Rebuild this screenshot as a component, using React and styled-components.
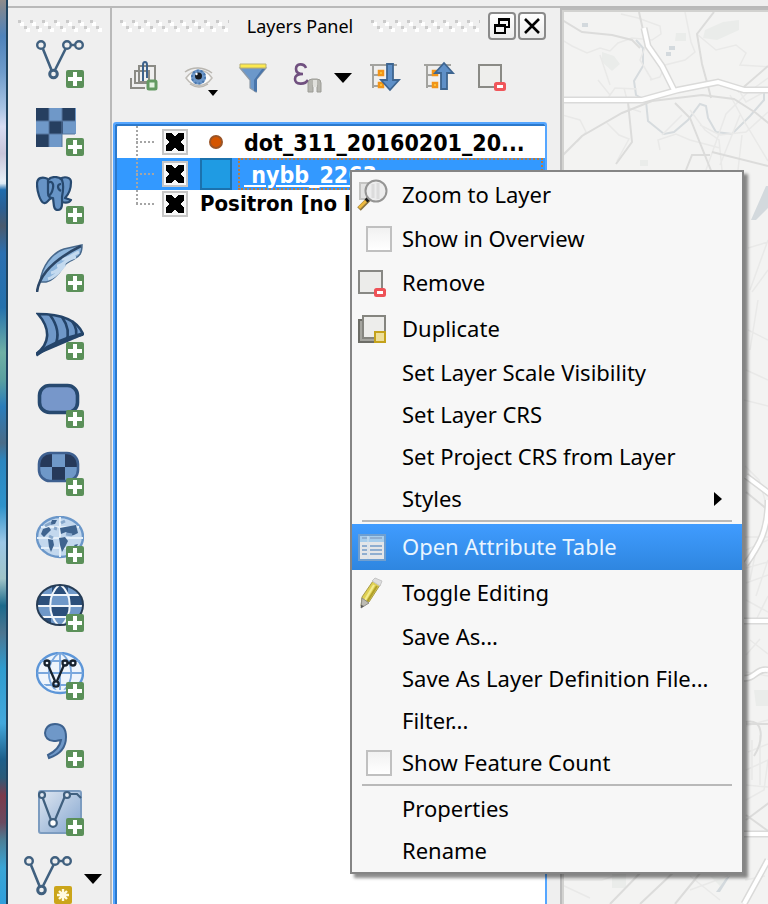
import React from 'react';
import styled, { createGlobalStyle, css } from 'styled-components';

const GlobalStyle = createGlobalStyle`
  *, *::before, *::after { box-sizing: border-box; }
  body { margin: 0; background: #efefef; color: #000; font-family: "Noto Sans", "Open Sans", sans-serif; }
  button { border: 0; padding: 0; background: none; color: inherit; font: inherit; }
  svg { display: block; flex: none; }
`;

/* ---------- shell ---------- */

const Desktop = styled.div`
  position: relative;
  display: flex;
  height: 100vh;
  overflow: hidden;
`;

const Wallpaper = styled.div`
  flex: 0 0 8px;
  border-right: 2px solid #1f435f;
  background: linear-gradient(
    #8f8c8b 0, #7d8794 1%, #4f83bb 4%, #6f9ccb 8%, #a9c4e4 12%, #d8dcf2 14%, #c9c5da 17%,
    #e6eef6 20%, #dbe9f4 20.3%, #1f6cad 21%, #2a5f94 23%, #4a5a6d 25%, #2a6fb0 28%, #2471ad 34%,
    #6fb0a5 39%, #5aa0a0 42%, #2a7dbb 45%, #4a6c88 49%, #2a86c0 51%, #2f93cb 56%, #9cc7e6 60%,
    #a0c4c8 64%, #1b6a8c 67%, #4c7590 70%, #2f9ccf 74%, #43a8dc 80%, #1d5f8a 84%, #2a5a78 86%,
    #7b3a4b 88%, #6a4a60 91%, #4b7f97 93%, #39a5d6 96%, #2f9fdc 100%
  );
`;

const AppWindow = styled.div`
  flex: 1;
  min-width: 0;
  display: flex;
  flex-direction: column;
  background: #efefef;
`;

const TopStrip = styled.div`
  flex: 0 0 8px;
  border-bottom: 2px solid #b9b9b9;
`;

const Workspace = styled.div`
  flex: 1;
  min-height: 0;
  display: flex;
`;

const Grip = styled.div`
  flex: ${p => (p.$fill ? '1 1 0' : 'none')};
  height: 12px;
  background:
    conic-gradient(from 0deg at 3px 3px, transparent 75%, #cbcbcb 0) 0 0 / 12px 12px,
    conic-gradient(from 0deg at 3px 3px, transparent 75%, #cbcbcb 0) 6px 6px / 12px 12px,
    conic-gradient(from 0deg at 4px 4px, transparent 75%, #fff 0) 2px 2px / 12px 12px,
    conic-gradient(from 0deg at 4px 4px, transparent 75%, #fff 0) 8px 8px / 12px 12px;
`;

/* ---------- left toolbar ---------- */

const Toolbar = styled.nav`
  flex: 0 0 104px;
  display: flex;
  flex-direction: column;
  padding: 12px 8px 0 10px;
  border-right: 2px solid #b9b9b9;

  ${Grip} { margin-bottom: -2px; }
`;

const ToolButton = styled.button`
  flex: none;
  display: flex;
  align-items: flex-end;
  padding: 10px 18px;

  &:last-child { padding: 10px 0 0 6px; gap: 12px; }
  &:last-child > svg:last-child { margin-bottom: 20px; }
`;

const INK = '#40607f';
const NAVY = '#27496f';
const STEEL = '#6f98c8';

const Vee = ({ color = INK }) => (
  <g fill="none" stroke={color} strokeWidth="2.4">
    <path d="M7 9 15.500 30M19 30 29.500 9M35 5h4" strokeWidth="2.600" />
    <circle cx="5" cy="5" r="3.800" />
    <circle cx="31" cy="5" r="3.800" />
    <circle cx="43" cy="5" r="3.800" />
    <circle cx="17.500" cy="34" r="3.800" strokeWidth="3" />
  </g>
);

const PlusBadge = () => (
  <g>
    <rect x="30" y="30" width="18" height="18" rx="2" fill="#5b9059" />
    <path d="M39 32v14M32 39h14" stroke="#fff" strokeWidth="4" />
  </g>
);

const GLOBE_GRID = 'M0 24h48M4 12h40M4 36h40M24 3v42M24 3C9 14 9 34 24 45M24 3c15 11 15 31 0 42';

const toolIcons = {
  'Add Vector Layer': <Vee />,
  'Add Raster Layer': (
    <g>
      <path fill={STEEL} d="M0 0h40v26H26v13H0z" />
      <path fill="#263f60" d="M0 0h13v13H0zM26 0h13v13H26zM13 13h14v13H13zM0 26h13v13H0z" />
      <path d="M13 0v39M26 0v39M0 13h39M0 26h39" stroke="#56779f" strokeWidth="1" />
    </g>
  ),
  'Add PostGIS Layers': (
    <g stroke={NAVY} strokeWidth="2.200" fill="#6794c6" strokeLinejoin="round">
      <path d="M12 3C6 0 1 2 1 8c0 7 3 18 7 19 3 1 4-3 6-4l2-1" />
      <path d="M24 3c4-3 11-2 11 3 0 6-2 12-6 16l6 2c-2 3-6 3-9 2" />
      <path d="M12 4c3-4 11-4 14 0 2 5 1 12 0 17 0 6 1 13-4 13s-4-6-5-12c-3 0-5-1-5-5z" />
      <path d="M12 7c3-3 6 0 5 5s-2 7-5 8M25 8c-4 0-4 5 0 7" fill="none" />
    </g>
  ),
  'Add SpatiaLite Layer': (
    <g>
      <path d="M4 38C6 22 16 9 28 5l18-4c0 8-2 11-8 14-5 3-8 3-11 8-4 7-11 14-17 15z" fill="#8db5dc" stroke="#48698c" strokeWidth="1.500" />
      <path d="M12 35c8-2 12-9 17-14M15 29c6-1 10-6 14-10M21 22c6 0 9-7 19-9M26 15c6 1 11-5 17-7" stroke="#c4daef" strokeWidth="3" fill="none" />
      <path d="M1 48C3 31 19 15 45 2" stroke="#2c4767" strokeWidth="2.600" fill="none" />
    </g>
  ),
  'Add MSSQL Spatial Layer': (
    <g fill={STEEL} stroke="#244469" strokeWidth="2.600">
      <path d="M2 2c15 0 38 3 45 20L0 42c14-10 15-25 2-40z" />
      <path d="M14 3c9 12 9 22 5 31M26 5c7 10 7 18 4 25M36 9c5 7 5 13 3 17" fill="none" />
      <path d="M0 43c12-9 25-16 47-21" fill="none" strokeWidth="3.500" />
    </g>
  ),
  'Add Oracle Spatial Layer': (
    <rect x="3.500" y="5.500" width="38" height="27" rx="10" fill="#7797ca" stroke={NAVY} strokeWidth="3.600" />
  ),
  'Add Oracle GeoRaster Layer': (
    <g>
      <rect x="3" y="5" width="39" height="28" rx="11" fill={STEEL} />
      <path d="M16 5v14H3v-4C3 9 8 5 14 5zM29 5h3c6 0 10 5 10 10v4H29zM16 19h13v14H16z" fill="#26395a" />
      <rect x="3" y="5" width="39" height="28" rx="11" fill="none" stroke="#3e6090" strokeWidth="2.600" />
    </g>
  ),
  'Add WMS/WMTS Layer': (
    <g>
      <ellipse cx="24" cy="21" rx="23" ry="20" fill="#c3d8ee" stroke="#6b97c9" strokeWidth="2.400" />
      <path d="M1 22h46M24 1v40M5 11h38M5 32h38" stroke="#e4eff9" strokeWidth="2" />
      <path d="M7 13l6-2 2 3-4 4-3 3-3-3zM12 23l5 1 1 5-3 7-2-5zM24 12l5-1 11-2 2 8-4 2-4 1-4-4-5 2zM23 22l6-1 3 4-3 6-3 5-2-7zM38 29l4-1-2 4zM16 4l5 0-2 4-5 1z" fill="#3f648f" />
      <path d="M9 10l6-3M18 12l3 1M25 7l4-2M30 18l6 1M13 20l4 2" stroke="#87a8cc" strokeWidth="3" />
    </g>
  ),
  'Add WCS Layer': (
    <g>
      <clipPath id="wcs"><ellipse cx="24" cy="21" rx="23" ry="20" /></clipPath>
      <g clipPath="url(#wcs)">
        <path fill={STEEL} d="M0 0h48v42H0z" />
        <path fill="#2b4f7b" d="M16 0h16v11H16zM0 11h15v11H0zM34 11h14v11H34zM15 22h19v11H15zM0 33h15v9H0z" />
        <path d="M0 11h48M0 22h48M0 33h48M24 0C11 11 11 31 24 43M24 0c13 11 13 31 0 43" stroke="#f1f6fb" strokeWidth="2" fill="none" />
      </g>
      <ellipse cx="24" cy="21" rx="23" ry="20" fill="none" stroke="#263c55" strokeWidth="2" />
    </g>
  ),
  'Add WFS Layer': (
    <g>
      <clipPath id="wfs"><ellipse cx="24" cy="21" rx="23" ry="20" /></clipPath>
      <ellipse cx="24" cy="21" rx="23" ry="20" fill="#eef4fb" stroke="#5d96d8" strokeWidth="2.400" />
      <path d={GLOBE_GRID} transform="translate(0 -3)" stroke="#79a7dd" strokeWidth="1.800" fill="none" clipPath="url(#wfs)" />
      <g fill="none" stroke="#17222e" strokeWidth="2.300">
        <path d="M12 13 19 29M21 29 28 13M32 11h3" />
        <circle cx="11" cy="11" r="2.500" />
        <circle cx="29" cy="11" r="2.500" />
        <circle cx="37" cy="11" r="2.500" />
        <circle cx="20" cy="32" r="2.700" />
      </g>
    </g>
  ),
  'Add Delimited Text Layer': (
    <path d="M30 17C30 8 26 4 19 4S9 9 9 13s3 8 9 8c3 0 5-1 7-1-1 6-5 11-13 15l1 3c12-4 17-12 17-21z" fill={STEEL} stroke="#3d628f" strokeWidth="2" />
  ),
  'Add Virtual Layer': (
    <g>
      <linearGradient id="virt" x1="0" y1="0" x2="1" y2="1">
        <stop offset="0" stopColor="#dfe7f1" />
        <stop offset="1" stopColor="#83a5cf" />
      </linearGradient>
      <rect x="3" y="3" width="42" height="42" rx="2" fill="url(#virt)" stroke="#7c9cc0" strokeWidth="2" />
      <path d="M6 8 15 32M19 32 29 8M33 6h8l4 4" stroke={INK} strokeWidth="2.200" fill="none" />
      <g fill="#dfe7f1" stroke={INK} strokeWidth="2.200">
        <circle cx="6" cy="7" r="3" />
        <circle cx="31" cy="7" r="3" />
        <circle cx="17" cy="35" r="3.800" fill="#fff" />
      </g>
    </g>
  ),
};

const Icon48 = ({ children }) => (
  <svg width="48" height="48" viewBox="0 0 48 48" aria-hidden="true">{children}</svg>
);

const CaretDown = () => (
  <svg width="18" height="10" viewBox="0 0 18 10" aria-hidden="true">
    <path d="M0 0h18l-9 10z" />
  </svg>
);

/* ---------- layers dock ---------- */

const Dock = styled.section`
  flex: 0 1 448px;
  min-width: 0;
  display: flex;
  flex-direction: column;
`;

const DockHeader = styled.header`
  flex: 0 0 36px;
  display: flex;
  align-items: center;
  padding: 0 14px 0 8px;
`;

const DockTitle = styled.h1`
  margin: 0 18px;
  font-size: 18px;
  font-weight: 400;
  line-height: 24px;
  white-space: nowrap;
`;

const FrameButtons = styled.div`
  display: flex;
  gap: 2px;
  margin-left: 8px;
`;

const FrameButton = styled.button`
  display: grid;
  place-items: center;
  width: 28px;
  height: 28px;
  border: 2px solid #8a8a8a;
  border-radius: 4px;
  background: linear-gradient(#fff, #ececec);
`;

const DockTools = styled.div`
  flex: 0 0 78px;
  display: flex;
  align-items: center;
  gap: 18px;
  padding: 0 0 10px 16px;
`;

const DockTool = styled.button`
  flex: none;
  display: flex;
  align-items: center;
  gap: 8px;
  height: 36px;
  padding-left: 2px;
  width: ${p => (p.$split ? 60 : 36)}px;
`;

const Icon32 = ({ children }) => (
  <svg width="34" height="36" viewBox="0 0 34 36" aria-hidden="true">{children}</svg>
);

const TreeMark = () => (
  <g fill="none">
    <path d="M0 5h27M3 5v23M3 15h8M3 26h8" stroke="#a3a39f" strokeWidth="2" />
    <path d="M9 11h4v4H9zM9 23h4v4H9z" stroke="#f19418" strokeWidth="2.500" fill="#ffe04a" />
  </g>
);

const dockTools = [
  ['Add Group', (
    <g fill="none" stroke="#8b8b85" strokeWidth="2">
      <path d="M9 5h16v16H9zM5 10h14v12H5z" transform="translate(0 1)" />
      <path d="M1 18v10h14" />
      <path d="M13 21V5c0-4 4-4 4 0v13" stroke="#3d628b" />
      <rect x="18" y="21" width="8" height="8" rx="1" stroke="#639a62" strokeWidth="3" fill="#e3f2e1" />
    </g>
  )],
  ['Manage Layer Visibility', (
    <g>
      <path d="M2 18C9 8 22 8 28 18c-7 10-19 10-26 0z" fill="#fbfbfa" stroke="#c0bdb8" strokeWidth="1.500" />
      <path d="M1 12C9 6 20 7 28 13M6 24c6 4 12 4 18 0" fill="none" stroke="#b9b6b0" strokeWidth="1.500" />
      <circle cx="14.500" cy="17" r="7.500" fill="#6d98ca" />
      <circle cx="14.500" cy="17" r="6.500" fill="none" stroke="#4c78ad" strokeWidth="2" strokeDasharray="2 2" />
      <circle cx="14.500" cy="16" r="3.500" fill="#161a20" />
      <circle cx="12.500" cy="14" r="1.200" fill="#fff" />
      <path d="M24 30h10l-5 6z" />
    </g>
  )],
  ['Filter Legend', (
    <g>
      <path d="M2 8h26L18 20v12l-6-4v-8z" fill="#6c98ca" stroke="#8f9aa6" strokeWidth="1.200" />
      <path d="M16 20v11l3 1V19l8-10h-3z" fill="#4a76ab" />
      <path d="M2 4h26v4H2z" fill="#fce94f" stroke="#b7ae72" strokeWidth="1" />
    </g>
  )],
  ['Filter by Expression', (
    <g>
      <path d="M14 8C12 3 4 3 4 9c0 3 2 5 7 5C5 14 3 16 3 19c0 6 10 6 13 1" fill="none" stroke="#70507f" strokeWidth="2.600" />
      <path d="M16 32V23q0-4 4-4h5q4 0 4 4v9h-4v-7h-4v7z" fill="#b5b5af" stroke="#9c9c96" strokeWidth="1" />
      <path d="M21 20h4v7h-4z" fill="#e0e0dc" />
    </g>
  ), true],
  ['Expand All', (
    <g>
      <TreeMark />
      <path d="M17 4h6v16h6l-9 10-9-10h6z" fill="#5f90c8" stroke="#3e6590" strokeWidth="1.800" />
    </g>
  )],
  ['Collapse All', (
    <g>
      <TreeMark />
      <path d="M17 29h6V13h6L20 3l-9 10h6z" fill="#5f90c8" stroke="#3e6590" strokeWidth="1.800" />
    </g>
  )],
  ['Remove Layer', (
    <g>
      <path d="M1 5h22v22H1z" fill="#eeeeec" stroke="#8a8a85" strokeWidth="2" />
      <rect x="17.500" y="23.500" width="9" height="6" rx="1" fill="#fff" stroke="#f0565b" strokeWidth="3" />
    </g>
  )],
];

/* ---------- layer tree ---------- */

const Tree = styled.ul`
  flex: 1;
  min-height: 0;
  margin: 0 13px 0 1px;
  padding: 2px 0 0 2px;
  list-style: none;
  overflow: hidden;
  border: 2px solid #55a6ff;
  border-bottom: 0;
  border-radius: 3px 3px 0 0;
  background: #fff;
  box-shadow: inset 2px 2px 0 #2b79cc;
  font: 700 23px/32px "DejaVu Sans Condensed", "DejaVu Sans", sans-serif;
`;

const LayerRow = styled.li`
  display: flex;
  align-items: center;
  height: ${p => (p.$last ? 28 : 32)}px;
  padding-left: 19px;
  font-size: ${p => (p.$last ? 22 : 23)}px;
  background: ${p => (p.$selected ? '#3399ff' : 'transparent')};
`;

const Branch = styled.span`
  flex: 0 0 20px;
  height: 100%;
  margin-right: 6px;
  background:
    repeating-linear-gradient(#a5a5a5 0 2px, transparent 2px 4px) 0 0 / 2px ${p => (p.$last ? '50%' : '100%')} no-repeat,
    repeating-linear-gradient(to right, #a5a5a5 0 2px, transparent 2px 4px) 0 50% / 100% 2px no-repeat;
`;

const CrossBox = styled.input`
  appearance: none;
  flex: none;
  width: 26px;
  height: 26px;
  margin: 0 12px 0 0;
  border: 2px solid #c6c6c6;
  background: #f8f8f8;

  &:checked {
    background:
      linear-gradient(45deg, transparent 36%, #000 36% 64%, transparent 64%) center / 18px 18px no-repeat,
      linear-gradient(-45deg, transparent 36%, #000 36% 64%, transparent 64%) center / 18px 18px no-repeat,
      #f8f8f8;
    box-shadow: inset 0 0 0 2px #f8f8f8;
  }
`;

const Swatch = styled.span`
  flex: 0 0 32px;
  height: 32px;
  display: grid;
  place-items: center;
  margin-right: ${p => (p.$fill ? 6 : 12)}px;
  ${p => p.$fill && css`
    background: #1f9be3;
    border: 2px solid #1b71ad;
  `}
`;

const Dot = styled.span`
  width: 14px;
  height: 14px;
  border: 2px solid #9a5426;
  border-radius: 50%;
  background: #d45500;
`;

const LayerName = styled.label`
  flex: 1;
  min-width: 0;
  padding-top: ${p => (p.$last ? 0 : 2)}px;
  overflow: hidden;
  white-space: pre;
  ${p => p.$selected && css`
    padding-left: 4px;
    margin-right: 2px;
    border: 2px dotted #c07a3a;
    color: #fff;
    line-height: 26px;
    text-decoration: underline;
    text-decoration-thickness: 2px;
    text-underline-offset: 2px;
  `}
`;

/* ---------- map ---------- */

const MapPane = styled.main`
  flex: 1;
  min-width: 0;
  border: solid #bbb;
  border-width: 2px 0 0 2px;
  background: #f3f3f2;
  overflow: hidden;

  svg {
    width: 100%;
    height: 100%;
    border: solid #d2d2d0;
    border-width: 2px 0 0 2px;
  }
`;

const MINOR = [
  'M562 40l10 6 15 7 13-5 10 3 8-8 14-5 20 2 9-6-1-8-22-8-17-4',
  'M685 12l6 30 4 10-10 8-20 5-5 12-10 3',
  'M698 35l18 15 20-5 10 8-6 12 30 2M605 102l10-14 22 1M598 80l12 15',
  'M562 115l18 5 6 12-9 10M607 123l12 12 10 4-12 22M660 150l-2-10 18-6 14 6 30 8',
  'M690 110l15 20 14 10 3 30M700 125l20 10 26-3 22-20M730 95l14 26 24 40M720 165l20-50M742 135l-4 35',
  'M768 78l-22 16-20 20-20 56M662 135l20-20M740 92l6 10 22-12',
  'M624 88l5 20 12 4M648 40l-8 20 12 20M600 55l10 30',
  'M748 248l20-6M750 290l18-50M768 270l-16 22M748 330l20 10M758 300l-8 50M746 370l22 10M744 400l24 6',
  'M745 466l14 14 9 30M745 537l23 0M746 550l22-10M746 568l22-6M758 540l-8 40M746 600l22 12M746 583l22-8M756 620l12-24M768 560l-12 36',
  'M750 640l18 14M746 655l14-16M746 672l22 4M768 720l-22 6M748 752l20-8M746 770l22-10M752 740v40M760 735v50M746 785l22 2',
  'M560 884l30 14M562 880l40 0 26-8M690 890l38-14M690 876l30 24M745 880l20-4M746 800l18-10 4-30',
];
const ROADS = [
  'M562 20l20 12 30 3 20 5 8 8',
  'M639 12l4 18M714 12l-17 22 5 30 6 22 3 12',
  'M562 156l20-20 40-23 30-12 50-6 32 4 22 14 22 18',
  'M628 102l4 40-16 22M675 103l15 15 10 25 12 30',
  'M710 155l-18 0-6 15M712 152l56 14M768 66l-30 26',
  'M610 904l35-36M640 904l36-34M675 904l26-32',
  'M746 722c18-4 18 18 8 34M746 724h22M746 820l24-18M746 815l22 16M746 492l22 18',
];
const HIGHWAYS = [
  'M562 100h80l36-10 40-8 26 8h24',
  'M644 28l4 18 14 20 12 24',
  'M746 476l24 18M768 500c0 30-8 44-22 64M744 621h24M744 678c10 2 12-10 24-8M744 834h24M768 860l-24 44',
];
const WATER = 'M636 40l7 8v18l-9 15 2 14 10 6 2 20 16 13 10-2 14-12 12-16 6 2 2 12 8 14 16 2 18-18 14-16v-10';

const MapArt = () => (
  <svg viewBox="564 12 204 892" preserveAspectRatio="xMinYMin slice" aria-label="Base map" role="img">
    <g fill="#eaecea">
      <path d="M705 30l18-8 16-2v10l-22 10-14-2zM676 33h10v8h-11zM602 52l12 4 6 8-8 7-10-9zM754 690h14v16h-12zM612 874h14v14h-14zM640 160h8v6h-8zM710 876l16 2-6 8z" />
    </g>
    <g fill="#d3d9dd">
      <path d="M766 186h4v20l-14 14h-5zM669 46h6v4h-6zM666 52h5v4h-5zM582 23h6v4h-6z" />
      <path d="M716 892l10-14 4-2-10 16z" />
    </g>
    <path d={WATER} fill="none" stroke="#d6dbde" strokeWidth="2" />
    <g fill="none" stroke="#e9e9e8" strokeWidth="1.500">{MINOR.map(d => <path key={d} d={d} />)}</g>
    <g fill="none" stroke="#dcdcdb" strokeWidth="2">{ROADS.map(d => <path key={d} d={d} />)}</g>
    <g fill="none" stroke="#dadad9" strokeWidth="7">{HIGHWAYS.map(d => <path key={d} d={d} />)}</g>
    <g fill="none" stroke="#fff" strokeWidth="4">{HIGHWAYS.map(d => <path key={d} d={d} />)}</g>
  </svg>
);

/* ---------- context menu ---------- */

const Menu = styled.div`
  position: absolute;
  left: 350px;
  top: 170px;
  width: 394px;
  border: 2px solid #858585;
  background: #f7f7f7;
  box-shadow: 4px 4px 3px rgba(0, 0, 0, 0.45);
  font-size: 22px;
  line-height: 30px;
`;

const itemStyle = css`
  display: flex;
  align-items: center;
  width: 100%;
  height: ${p => (p.$tall ? 46 : 42)}px;
  padding-right: 20px;
  text-align: left;
  white-space: nowrap;
  color: ${p => (p.$active ? '#e9f5ff' : '#000')};
  background: ${p => (p.$active ? 'linear-gradient(#409cff, #2e86e0)' : 'none')};
`;

const MenuButton = styled.button`${itemStyle}`;
const MenuCheck = styled.label`${itemStyle}`;

const IconCell = styled.span`
  flex: 0 0 50px;
  padding-left: ${p => (p.$check ? 14 : 4)}px;
`;

const MenuBox = styled.input`
  appearance: none;
  display: block;
  width: 26px;
  height: 26px;
  margin: 0;
  border: 2px solid #c0c0c0;
  background: linear-gradient(#f1f1f1, #fff);
`;

const ItemText = styled.span`
  flex: 1;
  padding-bottom: 2px;
`;

const Separator = styled.hr`
  height: 2px;
  margin: 0 10px 2px;
  border: 0;
  background: #b9b9b9;
`;

const menuIcons = {
  zoom: (
    <g>
      <path d="M4 5h15v16H4z" fill="#e3e3e2" stroke="#c4c4c2" strokeWidth="2" />
      <path d="M3 31l10-10" stroke="#8a7440" strokeWidth="5" />
      <path d="M3 30l8-8" stroke="#edb93f" strokeWidth="3" />
      <path d="M10 23l5-5" stroke="#1e1e1c" strokeWidth="4" />
      <circle cx="20" cy="13" r="10.500" fill="#ededed" stroke="#959594" strokeWidth="2" />
      <path d="M17 6v14M22 5v16" stroke="#dcdcdc" strokeWidth="3" />
    </g>
  ),
  remove: (
    <g>
      <path d="M3 5h23v22H3z" fill="#ececea" stroke="#888884" strokeWidth="2" />
      <rect x="19.500" y="23.500" width="9" height="6" rx="1" fill="#fff" stroke="#ee5257" strokeWidth="3" />
    </g>
  ),
  duplicate: (
    <g>
      <path d="M3 8h5v18h18v4H3z" fill="#a5a59f" stroke="#6d6d67" strokeWidth="2" />
      <path d="M7 4h22v22H7z" fill="#ededeb" stroke="#85857f" strokeWidth="2" />
      <path d="M19 20h10v10H19z" fill="#eedf9a" stroke="#c4a21b" strokeWidth="2" />
    </g>
  ),
  table: (
    <g>
      <path d="M2 4h28v27H2z" fill="#6f9fd0" />
      <path d="M4 6h24v6H4z" fill="#a6cdec" />
      <path d="M4 12h24v17H4z" fill="#e4e6e8" />
      <path d="M6 8h5M14 8h12M6 16h5M14 16h12M6 20h5M14 20h12M6 24h5M14 24h12" stroke="#8faed0" strokeWidth="2" />
      <path d="M12 6v23" stroke="#d5e2ee" strokeWidth="1" />
    </g>
  ),
  pencil: (
    <g>
      <path d="M17 5l7 4-11 17-8 4 1-9z" fill="#dfd053" stroke="#a79a48" strokeWidth="1" />
      <path d="M18 9L9 24" stroke="#f4ec8f" strokeWidth="2" />
      <path d="M21 10L11 26" stroke="#b09f2a" strokeWidth="2" />
      <path d="M16 5l3-3 7 3-2 5z" fill="#dedede" stroke="#c5c5c5" strokeWidth="1" />
      <path d="M6 22l7 5-8 5z" fill="#bdbbb2" stroke="#8f8e88" strokeWidth="1" />
      <path d="M5 29l3 1-3 2z" fill="#555" />
    </g>
  ),
};

const menuItems = [
  { text: 'Zoom to Layer', icon: 'zoom' },
  { text: 'Show in Overview', check: true },
  { text: 'Remove', icon: 'remove' },
  { text: 'Duplicate', icon: 'duplicate' },
  { text: 'Set Layer Scale Visibility' },
  { text: 'Set Layer CRS' },
  { text: 'Set Project CRS from Layer' },
  { text: 'Styles', submenu: true },
  null,
  { text: 'Open Attribute Table', icon: 'table', active: true },
  { text: 'Toggle Editing', icon: 'pencil' },
  { text: 'Save As...' },
  { text: 'Save As Layer Definition File...' },
  { text: 'Filter...' },
  { text: 'Show Feature Count', check: true },
  null,
  { text: 'Properties' },
  { text: 'Rename' },
];

const MenuEntry = ({ item }) => {
  if (item.check) {
    return (
      <MenuCheck>
        <IconCell $check><MenuBox type="checkbox" /></IconCell>
        <ItemText>{item.text}</ItemText>
      </MenuCheck>
    );
  }
  return (
    <MenuButton type="button" role="menuitem" $tall={!!item.icon} $active={item.active}>
      <IconCell>
        {item.icon && (
          <svg width="32" height="34" viewBox="0 0 32 34" aria-hidden="true">{menuIcons[item.icon]}</svg>
        )}
      </IconCell>
      <ItemText>{item.text}</ItemText>
      {item.submenu && (
        <svg width="8" height="14" viewBox="0 0 8 14" aria-hidden="true"><path d="M0 0l8 7-8 7z" /></svg>
      )}
    </MenuButton>
  );
};

export default function App() {
  return (
    <>
      <GlobalStyle />
      <Desktop>
        <Wallpaper />
        <AppWindow>
          <TopStrip />
          <Workspace>
            <Toolbar aria-label="Manage layers">
              <Grip />
              {Object.entries(toolIcons).map(([name, art]) => (
                <ToolButton key={name} type="button" aria-label={name}>
                  <Icon48>{art}<PlusBadge /></Icon48>
                </ToolButton>
              ))}
              <ToolButton type="button" aria-label="New Vector Layer">
                <Icon48>
                  <Vee />
                  <rect x="30" y="30" width="18" height="18" rx="2" fill="#cba51a" />
                  <path d="M39 33v12M33 39h12M35 35l8 8M43 35l-8 8" stroke="#fffbe0" strokeWidth="2.400" />
                </Icon48>
                <CaretDown />
              </ToolButton>
            </Toolbar>

            <Dock>
              <DockHeader>
                <Grip $fill />
                <DockTitle>Layers Panel</DockTitle>
                <Grip $fill />
                <FrameButtons>
                  <FrameButton type="button" aria-label="Float panel">
                    <svg width="18" height="18" viewBox="0 0 18 18" fill="none" stroke="#000" strokeWidth="2">
                      <path d="M6 7V2h10v8h-4M6 3h10" />
                      <path d="M2 8h10v8H2zM2 9h10" />
                    </svg>
                  </FrameButton>
                  <FrameButton type="button" aria-label="Close panel">
                    <svg width="16" height="16" viewBox="0 0 16 16" stroke="#000" strokeWidth="2.600">
                      <path d="M1 1l14 14M15 1L1 15" />
                    </svg>
                  </FrameButton>
                </FrameButtons>
              </DockHeader>
              <DockTools>
                {dockTools.map(([name, art, split]) => (
                  <DockTool key={name} type="button" aria-label={name} $split={split}>
                    <Icon32>{art}</Icon32>
                    {split && <CaretDown />}
                  </DockTool>
                ))}
              </DockTools>
              <Tree>
                <LayerRow>
                  <Branch />
                  <CrossBox id="layer-dot" type="checkbox" defaultChecked />
                  <Swatch><Dot /></Swatch>
                  <LayerName htmlFor="layer-dot">dot_311_20160201_20...</LayerName>
                </LayerRow>
                <LayerRow $selected>
                  <Branch />
                  <CrossBox id="layer-nybb" type="checkbox" defaultChecked />
                  <Swatch $fill />
                  <LayerName htmlFor="layer-nybb" $selected>{' nybb_2263'}</LayerName>
                </LayerRow>
                <LayerRow $last>
                  <Branch $last />
                  <CrossBox id="layer-positron" type="checkbox" defaultChecked />
                  <LayerName htmlFor="layer-positron" $last>Positron [no l</LayerName>
                </LayerRow>
              </Tree>
            </Dock>

            <MapPane><MapArt /></MapPane>
          </Workspace>
        </AppWindow>

        <Menu role="menu" aria-label="Layer">
          {menuItems.map((item, i) => (item ? <MenuEntry key={item.text} item={item} /> : <Separator key={i} />))}
        </Menu>
      </Desktop>
    </>
  );
}
